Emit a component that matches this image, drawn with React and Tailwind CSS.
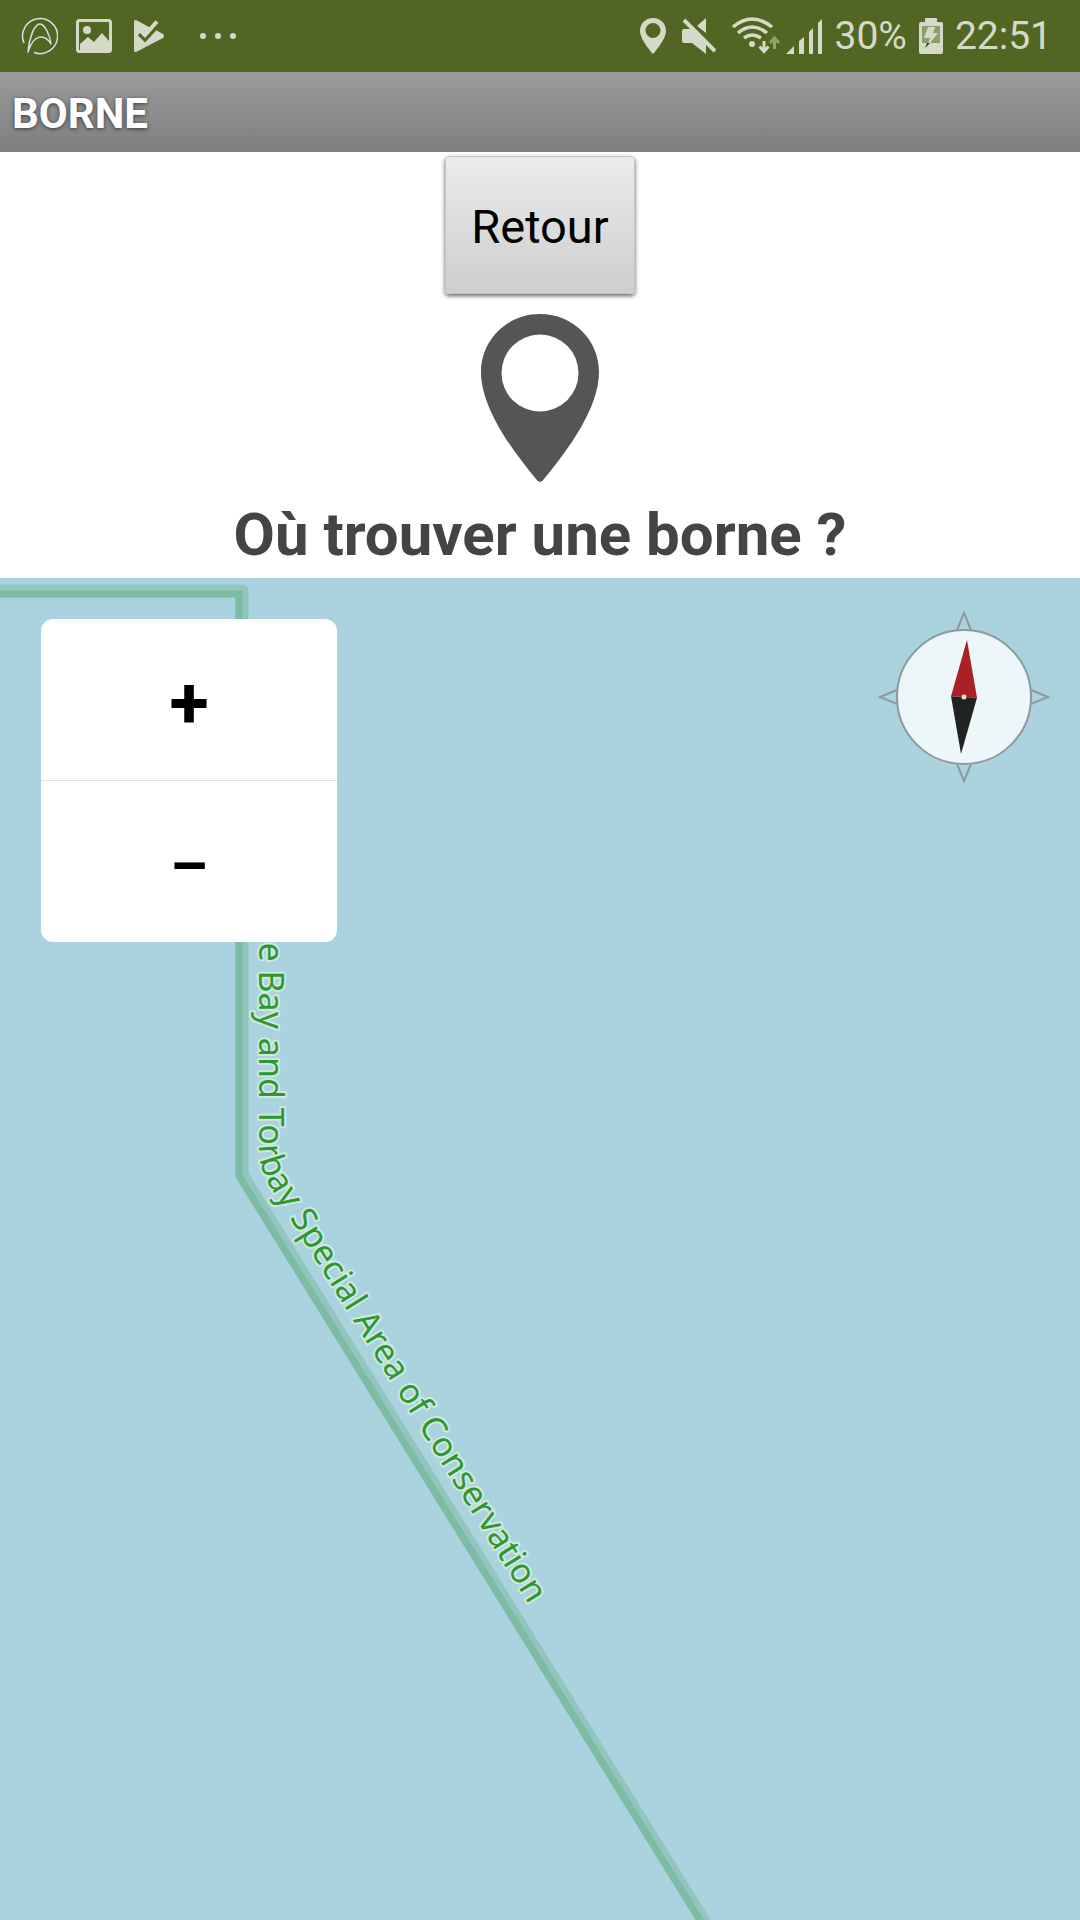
import React, { useState } from 'react';

const FONT = "font-['Roboto',sans-serif]";

// ── Status bar icons ──────────────────────────────────────
function LauncherIcon() {
  return (
    <svg width="38" height="38" viewBox="0 0 38 38" fill="none" stroke="#cfe3e0" strokeWidth="1.5">
      <path d="M4 26A17.500 17.500 0 1 1 14 35.500" />
      <path d="M8 35C9 22 14 7 20 7c5 0 10 12 11 20C25 17 14 16 8 35Z" strokeLinejoin="round" />
    </svg>
  );
}

function PictureIcon() {
  return (
    <svg width="36" height="38" viewBox="0 0 36 38">
      <rect x="1.5" y="3.5" width="33" height="31" rx="2" fill="none" stroke="#d5dac8" strokeWidth="3" />
      <circle cx="11" cy="13" r="4" fill="#d5dac8" />
      <path d="M4 27l8-7 6 5 8-9 7 8v9H4Z" fill="#d5dac8" />
    </svg>
  );
}

function PlayCheckIcon() {
  return (
    <svg width="32" height="38" viewBox="0 0 32 38">
      <path d="M0 5Q0 2 3 3.500L13 9l4 2 5 2 7 4q2 2 0 4L3 34.500Q0 36 0 33Z" fill="#d5dac8" />
      {/* Tick with its shadow cut out of the triangle */}
      <path d="M5 17l6 6L22 11" fill="none" stroke="#516623" strokeWidth="3.5" />
      <path d="M7 14l4 4L23 4.500" fill="none" stroke="#d5dac8" strokeWidth="4" />
    </svg>
  );
}

function PlaceIcon() {
  return (
    <svg width="26" height="36" viewBox="0 0 26 36">
      <path
        fillRule="evenodd"
        fill="#d5dac8"
        d="M13 0C5.500 0 0 5.500 0 13c0 9 13 23 13 23s13-14 13-23C26 5.500 20.500 0 13 0Zm0 20a7.500 7.500 0 1 1 0-15 7.500 7.500 0 0 1 0 15Z"
      />
    </svg>
  );
}

function MuteIcon() {
  return (
    <svg width="34" height="36" viewBox="0 0 34 36">
      <path d="M2 11h7L24 26v10L10 25H2Q0 25 0 23V13Q0 11 2 11Z" fill="#d5dac8" />
      <path d="M15 8l9-8v15Z" fill="#d5dac8" />
      <path d="M2 2l31 31" stroke="#d5dac8" strokeWidth="4" />
      <path d="M5 0l29 29" stroke="#516623" strokeWidth="2" />
    </svg>
  );
}

function WifiIcon() {
  return (
    <svg width="48" height="38" viewBox="0 0 48 38" fill="none" stroke="#d5dac8" strokeWidth="3.5">
      <path d="M1 10Q20-6 40 10" />
      <path d="M6 16Q20 4 35 16" />
      <path d="M12 21Q20 15 29 21" />
      <circle cx="20" cy="27" r="3" fill="#d5dac8" stroke="none" />
      <path d="M32 24v10M27.500 29.500l4.500 5 4.500-5" strokeWidth="3" />
      <path d="M42.500 32V22M38 26l4.500-5 4.500 5" stroke="#93a071" strokeWidth="3" />
    </svg>
  );
}

function SignalIcon() {
  return (
    <svg width="36" height="36" viewBox="0 0 36 36" fill="#d5dac8">
      <path d="M0 36l8-8v8ZM13 23l5-4v17h-5ZM23 14l4-4v26h-4ZM32 5l4-4v35h-4Z" />
    </svg>
  );
}

function BatteryIcon() {
  return (
    <svg width="24" height="36" viewBox="0 0 24 36">
      <path d="M7 0h10q1 0 1 1v3h4q2 0 2 2v28q0 2-2 2H2q-2 0-2-2V6q0-2 2-2h4V1q0-1 1-1Z" fill="#d5dac8" />
      <path d="M3 8h18v17H3Z" fill="#8f9d6c" />
      <path d="M9 9h7l-2 6h5L8 29l3-9H5Z" fill="#d5dac8" />
      <path d="M8 25h3l-5 5Z" fill="#2c3518" />
    </svg>
  );
}

// ── Page parts ────────────────────────────────────────────
function StatusBar() {
  return (
    <div className="flex h-[72px] items-center justify-between bg-[#516623] pr-7 pl-5 text-[39px] leading-none text-[#d5dac8]">
      <div className="flex items-center gap-[18px]">
        <LauncherIcon />
        <PictureIcon />
        <div className="pl-1"><PlayCheckIcon /></div>
        <div className="flex gap-[9px] pl-4">
          <span className="size-1.5 rounded-full bg-[#d5dac8]" />
          <span className="size-1.5 rounded-full bg-[#d5dac8]" />
          <span className="size-1.5 rounded-full bg-[#d5dac8]" />
        </div>
      </div>
      <div className="flex items-center gap-3">
        <div className="flex items-center gap-4">
          <PlaceIcon />
          <MuteIcon />
          <WifiIcon />
        </div>
        <div className="-ml-1.5"><SignalIcon /></div>
        <span>30%</span>
        <BatteryIcon />
        <span>22:51</span>
      </div>
    </div>
  );
}

function ZoomControl({ onZoom }) {
  return (
    <div className="absolute top-[41px] left-[41px] flex w-[296px] flex-col overflow-hidden rounded-xl bg-white leading-none font-bold text-black">
      <button type="button" aria-label="Zoom in" onClick={() => onZoom(1)} className="h-[162px] border-b border-[#d8e2e4] pt-2 text-[72px]">
        +
      </button>
      <button type="button" aria-label="Zoom out" onClick={() => onZoom(-1)} className="h-[161px] pt-2 text-[60px]">
        –
      </button>
    </div>
  );
}

function Compass() {
  return (
    <svg className="absolute top-[31px] right-7" width="176" height="176" viewBox="-88 -88 176 176" fill="none" stroke="#8b9a9d" strokeWidth="2">
      <circle r="67" fill="#edf6f9" />
      <path d="M-7-67L0-84 7-67M-7 67L0 84 7 67M-67-7L-84 0l17 7M67-7L84 0 67 7" />
      <g stroke="none" transform="rotate(3)">
        <path d="M-13 0L0-57 13 0Z" fill="#a92123" />
        <path d="M-13 0L0 57 13 0Z" fill="#212322" />
        <circle r="2.5" fill="#f3dcdc" />
      </g>
    </svg>
  );
}

function MapView() {
  const [, setZoom] = useState(12);

  return (
    <main className="relative min-h-[1342px] flex-1 overflow-hidden bg-[#abd2df]">
      <svg className="absolute top-0 left-0" width="1080" height="1342" viewBox="0 0 1080 1342" fill="none">
        {/* Boundary of the protected area: wide pale band, darker inner edge */}
        <path d="M-10 13H242V597L703 1342l20 32" stroke="#91c5bd" strokeWidth="13" strokeLinejoin="round" />
        <path d="M-10 16H239V598L700 1342l20 32" stroke="#7dbba5" strokeWidth="7" />
        <path id="area-label" d="M259 230V570Q259 592 273 613L529 1027" />
        <text
          className="font-['Noto_Sans',sans-serif] text-[34px]"
          fill="#2f9634"
          stroke="#cfe9df"
          strokeWidth="4"
          strokeLinejoin="round"
          paintOrder="stroke"
          textAnchor="end"
        >
          <textPath href="#area-label" startOffset="100%">Lyme Bay and Torbay Special Area of Conservation</textPath>
        </text>
      </svg>
      <ZoomControl onZoom={d => setZoom(z => z + d)} />
      <Compass />
    </main>
  );
}

export default function App() {
  return (
    <div className={`flex min-h-screen flex-col bg-white ${FONT}`}>
      <StatusBar />

      {/* Title bar */}
      <header className="flex h-20 items-center bg-linear-to-b from-[#9b9b9b] to-[#7f7f7f] px-3 pt-0.5">
        <h1 className="text-[42px] font-bold text-white [text-shadow:0_1px_4px_rgba(0,0,0,0.6)]">BORNE</h1>
      </header>

      {/* Intro */}
      <section className="flex flex-col items-center pt-1">
        <button
          type="button"
          className="h-[138px] w-[190px] rounded-sm border border-[#c4c4c4] bg-linear-to-b from-[#ebebeb] to-[#cecece] pt-1 text-[47px] text-black shadow-[0_2px_4px_rgba(0,0,0,0.6)]"
        >
          Retour
        </button>
        <svg className="mt-5" width="118" height="169" viewBox="0 0 118 169" aria-hidden="true">
          <path
            fillRule="evenodd"
            fill="#555555"
            d="M59 0C26 0 0 26 0 58c0 36 31 78 55 107q4 6 8 0C87 136 118 94 118 58 118 26 92 0 59 0Zm0 97.500a38.500 38.500 0 1 1 0-77 38.500 38.500 0 0 1 0 77Z"
          />
        </svg>
        <h2 className="pt-4 pb-2 text-[60px] leading-[71px] font-bold text-[#444444]">Où trouver une borne ?</h2>
      </section>

      <MapView />
    </div>
  );
}
